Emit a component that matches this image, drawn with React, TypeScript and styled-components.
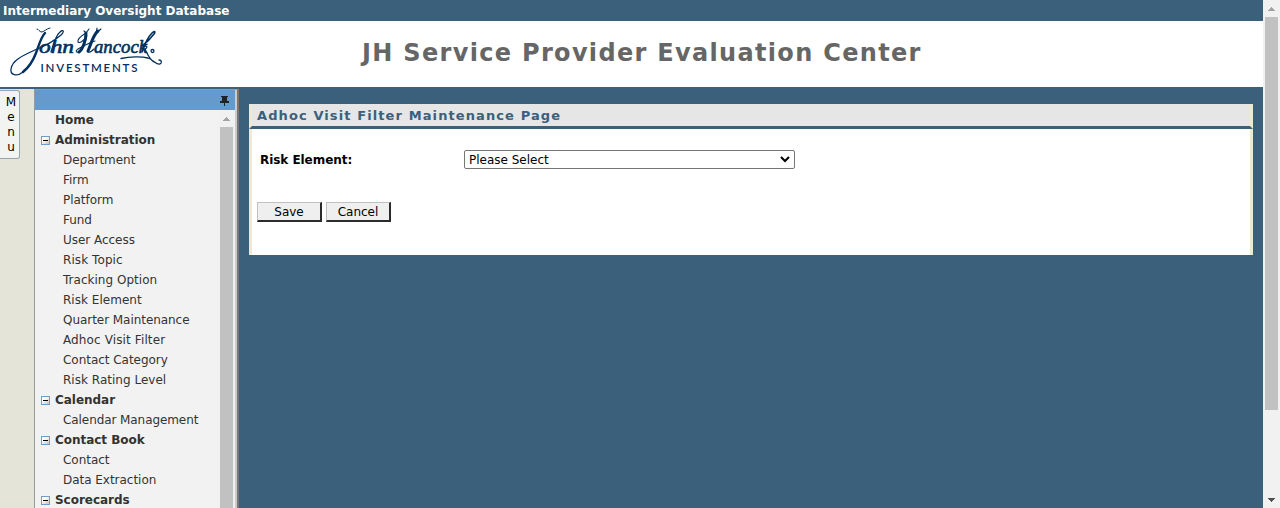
import React from "react";
import styled, { createGlobalStyle } from "styled-components";

const Global = createGlobalStyle`
  *{box-sizing:border-box}
  html,body{margin:0;padding:0;height:508px;overflow:hidden}
  body{font-family:"DejaVu Sans",Verdana,sans-serif;font-size:12px;color:#000;background:#3b607c}
`;

const Frame = styled.div`display:flex;width:1280px;height:508px;overflow:hidden;`;
const Page = styled.div`flex:1;display:flex;flex-direction:column;min-width:0;`;
const TopBar = styled.div`
  flex:none;height:21px;padding-left:3px;line-height:22px;white-space:nowrap;
  color:#fff;font-weight:bold;font-size:12px;background:#3b607c;
`;
const Banner = styled.header`
  flex:none;height:66px;display:flex;align-items:center;background:#fff;
  svg{flex:none;display:block}
`;
const BannerTitle = styled.h1`
  margin:0 0 2px 192px;font-size:24px;line-height:30px;font-weight:bold;
  letter-spacing:1.32px;color:#666;white-space:nowrap;
`;
const Body = styled.div`flex:1;display:flex;min-height:0;padding-top:2px;background:#3b607c;`;
const Rail = styled.div`flex:none;width:34px;padding-top:1px;background:#e4e5d8;`;
const MenuTab = styled.button`
  display:flex;flex-direction:column;align-items:center;width:20px;height:69px;
  padding:4px 0 0 3px;border:1px solid #91a7b4;border-left:0;border-radius:0 3px 3px 0;
  background:#f2f4f1;color:#000;font:12px/15px "DejaVu Sans",Verdana,sans-serif;
`;
const Sidebar = styled.aside`
  flex:none;width:205px;display:flex;flex-direction:column;
  border-left:1px solid #999;border-top:1px solid #999;border-right:2px solid #777;
`;
const SideInner = styled.div`
  flex:1;min-height:0;display:flex;flex-direction:column;border-right:2px solid #ccc;background:#f2f2f2;
`;
const SideHead = styled.div`
  flex:none;height:20px;display:flex;justify-content:flex-end;padding:6px 6px 0 0;background:#6699cc;
`;
const SideBody = styled.div`flex:1;min-height:0;display:flex;`;
const Tree = styled.nav`flex:1;overflow:hidden;`;
const Row = styled.div<{ $head?: boolean; $track?: number }>`
  height:20px;line-height:19px;display:flex;align-items:center;white-space:nowrap;color:#333;
  padding-left:${p => (p.$head ? 6 : 28)}px;
  font-weight:${p => (p.$head ? "bold" : "normal")};
  letter-spacing:${p => p.$track ?? -0.03}px;
`;
const Toggle = styled.span`
  width:9px;margin-right:5px;display:flex;padding-top:1px;
`;
const Scroll = styled.div<{ $w: number }>`
  flex:none;width:${p => p.$w}px;display:flex;flex-direction:column;align-items:center;background:#f1f1f1;
`;
const Thumb = styled.div<{ $h: number }>`flex:none;width:13px;height:${p => p.$h}px;background:#c1c1c1;`;
const ArrowBox = styled.div`flex:none;height:17px;width:17px;display:flex;`;
const Spacer = styled.div`flex:1;`;
const Main = styled.main`flex:1;padding:15px 10px 0;`;
const Panel = styled.section`height:151px;background:#fff;display:flex;flex-direction:column;`;
const PanelTitle = styled.h2`
  margin:0;height:25px;flex:none;padding-left:5px;line-height:23px;font-size:13px;font-weight:bold;
  letter-spacing:1.1px;color:#3b607c;background:#e6e6e6;border:3px solid #ece9d8;border-top:0;
  border-bottom-color:#3b607c;
`;
const PanelBody = styled.div`
  flex:1;border:solid #ece9d8;border-width:0 3px;padding:21px 5px 0;
`;
const Field = styled.div`display:flex;align-items:center;height:19px;padding-left:3px;`;
const Label = styled.label`width:204px;font-weight:bold;letter-spacing:-0.05px;`;
const Select = styled.div`
  width:331px;height:19px;border:1px solid #767676;border-radius:2px;padding:0 4px;
  display:flex;align-items:center;justify-content:space-between;
`;
const Buttons = styled.div`display:flex;gap:4px;margin-top:33px;`;
const Button = styled.button`
  width:65px;height:20px;padding:0;background:#efefef;color:#000;
  border:solid;border-width:1px 2px 2px 1px;border-color:#c0c0c0 #2b2b2b #2b2b2b #c0c0c0;
  font:12px/16px "DejaVu Sans",Verdana,sans-serif;
`;

const Logo = () => (
  <svg width="170" height="66" viewBox="0 21 170 66" fill="none" stroke="#00305f" strokeLinecap="round" strokeLinejoin="round">
    <g fill="#00305f" strokeWidth=".6" fontFamily="Liberation Serif, serif" fontStyle="italic" fontSize="19">
      <text x="39" y="53" textLength="35" lengthAdjust="spacingAndGlyphs">ohn</text>
      <text x="94" y="53" textLength="53" lengthAdjust="spacingAndGlyphs">ancock</text>
    </g>
    <text x="40.500" y="72" fill="#00305f" stroke="none" fontFamily="Lato, sans-serif" fontSize="11.500" fontWeight="600" textLength="97">INVESTMENTS</text>
    <path strokeWidth="1" d="M37 29c2 0 2 3 5 3 3-1 4-3 8-4" />
    <path strokeWidth="2.400" d="M45 33c-4 4-6 12-9 20-3 8-8 15-13 19" />
    <path strokeWidth="1.300" d="M23 72c-6 5-13 3-12-3 1-9 13-14 24-19 10-4 18-8 26-15 4-4 2-6-1-3-4 3-7 13-9 20" />
    <path strokeWidth="3" d="M86 33c0 7-3 16-7 19M98 31c-5 4-7 13-10 20" />
    <path strokeWidth="1.100" d="M84 31l2 2 3-4M97 28l-1 5 5-4M79 52c-3 1-4-1-1-3 7-4 13-7 17-8M86 33c-5 3-9 6-8 9 2 2 6-2 9-6M88 52c2 1 4-1 6-3" />
    <path strokeWidth="1.600" d="M142 46c4-3 9-8 12-12 2-3 0-3-2-1-4 4-8 13-10 19" />
    <path strokeWidth="1.300" d="M121 58.500c9-2 21-2 27-.5 6 2 8 7 12 6 2-1 2-4-1-4M143 47c3-2 6 0 2 2 2 4 4 10 9 13" />
    <circle cx="152.500" cy="51" r="1.500" strokeWidth="1.300" />
  </svg>
);

const Arrow = ({ up, color }: { up?: boolean; color: string }) => (
  <svg width="17" height="17" shapeRendering="crispEdges">
    <path fill={color} d={up ? "M8 7h1v1h1v1h1v1h1v1H5v-1h1V9h1V8h1z" : "M5 7h7v1h-1v1h-1v1H9v1H8v-1H7V9H6V8H5z"} />
  </svg>
);

const Minus = () => (
  <svg width="9" height="9" shapeRendering="crispEdges">
    <defs><linearGradient id="box" x2="1" y2="1"><stop offset=".3" stopColor="#fff" /><stop offset="1" stopColor="#c6c3b8" /></linearGradient></defs>
    <path d="M0 0h9v9H0z" fill="#6c9fd0" />
    <path d="M1 1h7v7H1z" fill="url(#box)" />
    <path d="M2 4h5v1H2z" fill="#000" />
  </svg>
);

const menu: { t: string; items: string[] }[] = [
  { t: "Administration", items: ["Department", "Firm", "Platform", "Fund", "User Access", "Risk Topic", "Tracking Option", "Risk Element", "Quarter Maintenance", "Adhoc Visit Filter", "Contact Category", "Risk Rating Level"] },
  { t: "Calendar", items: ["Calendar Management"] },
  { t: "Contact Book", items: ["Contact", "Data Extraction"] },
  { t: "Scorecards", items: [] },
];

const tracking: Record<string, number> = {
  "Adhoc Visit Filter": 0.12,
  "Risk Topic": 0.08,
  "Risk Element": 0.03,
  "Tracking Option": 0.02,
  "Risk Rating Level": 0.02,
  "Quarter Maintenance": -0.05,
  "Calendar Management": -0.08,
};

export default function App() {
  return (
    <Frame>
      <Global />
      <Page>
        <TopBar>Intermediary Oversight Database</TopBar>
        <Banner><Logo /><BannerTitle>JH Service Provider Evaluation Center</BannerTitle></Banner>
        <Body>
          <Rail><MenuTab>{["M", "e", "n", "u"].map(c => <span key={c}>{c}</span>)}</MenuTab></Rail>
          <Sidebar>
            <SideInner>
              <SideHead>
                <svg width="9" height="10" shapeRendering="crispEdges" fill="#222"><path d="M1 0h7v1H7v4h2v2H5v3H4V7H0V5h2V1H1z" /></svg>
              </SideHead>
              <SideBody>
                <Tree>
                  <Row $head><Toggle />Home</Row>
                  {menu.map(g => (
                    <React.Fragment key={g.t}>
                      <Row $head><Toggle><Minus /></Toggle>{g.t}</Row>
                      {g.items.map(i => <Row key={i} $track={tracking[i]}>{i}</Row>)}
                    </React.Fragment>
                  ))}
                </Tree>
                <Scroll $w={17}><ArrowBox><Arrow up color="#a3a3a3" /></ArrowBox><Thumb $h={400} /></Scroll>
              </SideBody>
            </SideInner>
          </Sidebar>
          <Main>
            <Panel>
              <PanelTitle>Adhoc Visit Filter Maintenance Page</PanelTitle>
              <PanelBody>
                <Field>
                  <Label>Risk Element:</Label>
                  <Select>
                    <span>Please Select</span>
                    <svg width="10" height="7" fill="none" stroke="#000" strokeWidth="2"><path d="M1 1l4 4 4-4" /></svg>
                  </Select>
                </Field>
                <Buttons><Button>Save</Button><Button>Cancel</Button></Buttons>
              </PanelBody>
            </Panel>
          </Main>
        </Body>
      </Page>
      <Scroll $w={17}>
        <ArrowBox><Arrow up color="#a3a3a3" /></ArrowBox>
        <Thumb $h={393} />
        <Spacer />
        <ArrowBox><Arrow color="#505050" /></ArrowBox>
      </Scroll>
    </Frame>
  );
}
